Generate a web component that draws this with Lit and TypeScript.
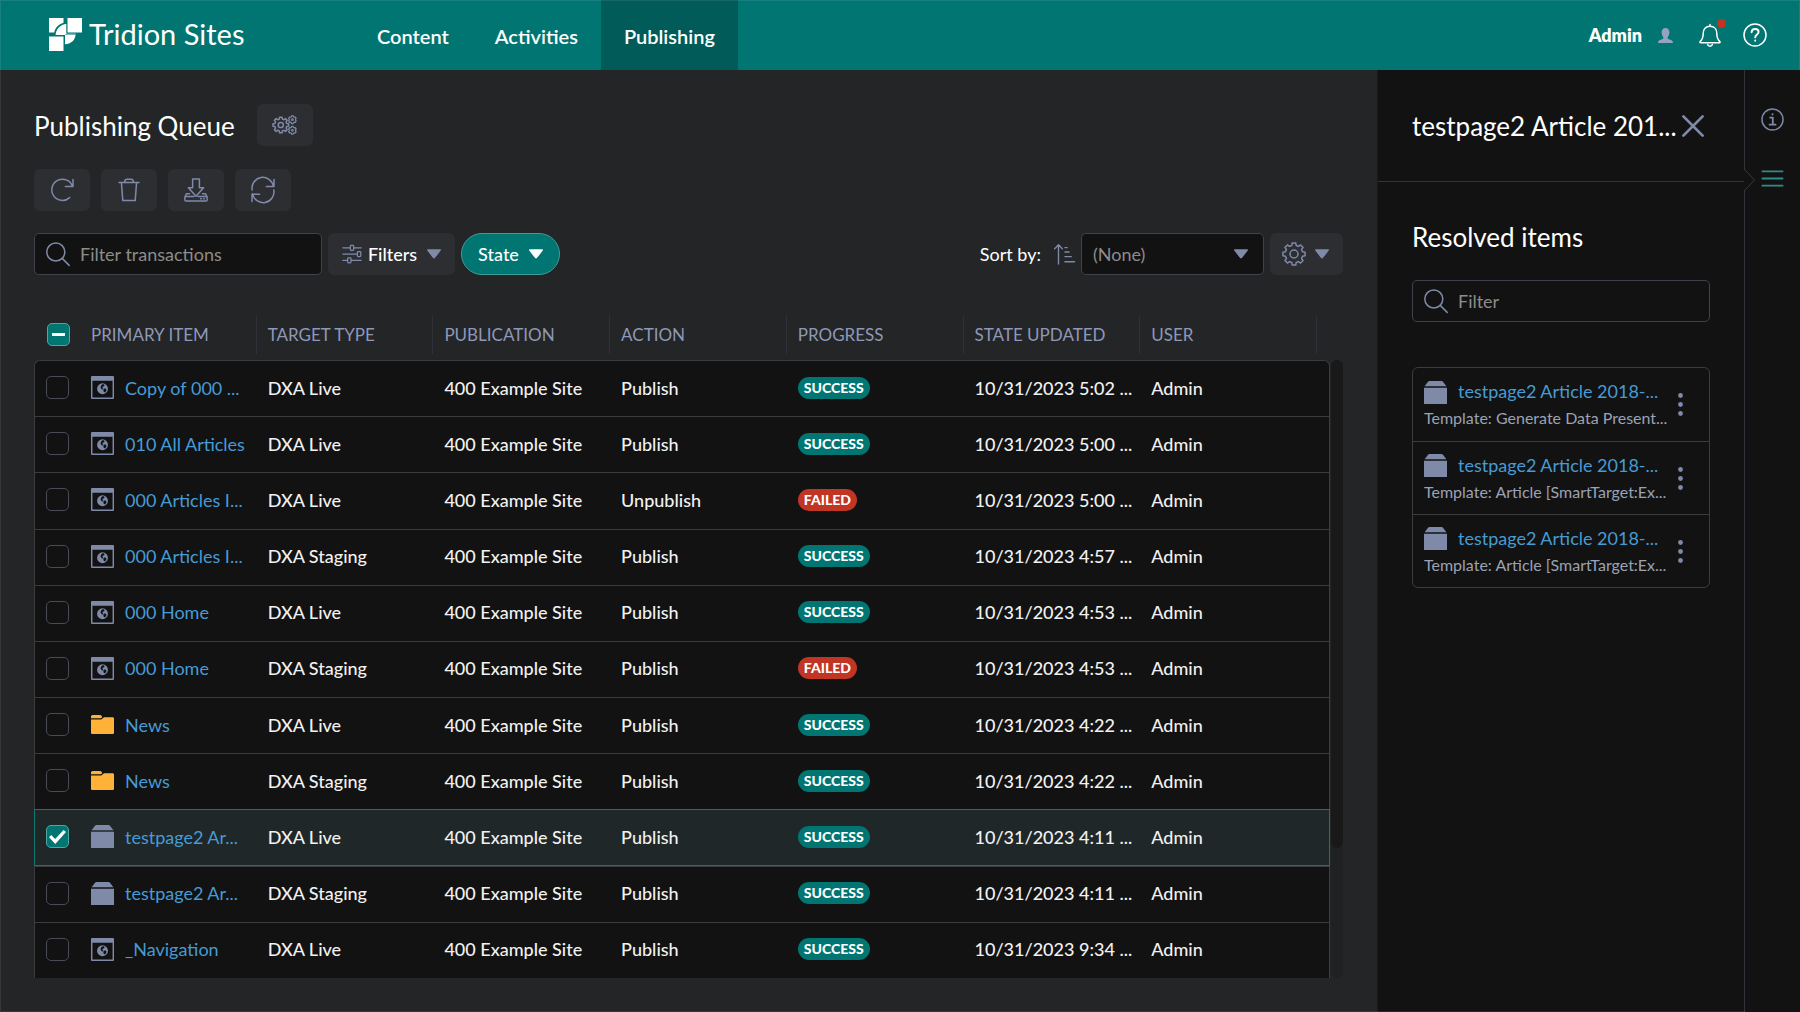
import { LitElement, html, svg, css } from "lit";
import { customElement, property, state } from "lit/decorators.js";
import { classMap } from "lit/directives/class-map.js";

type Kind = "page" | "folder" | "component";

interface Transaction {
  id: number;
  kind: Kind;
  title: string;
  target: string;
  action: string;
  status: "SUCCESS" | "FAILED";
  updated: string;
}

const PUBLICATION = "400 Example Site";
const USER = "Admin";

const tx = (
  id: number,
  kind: Kind,
  title: string,
  target: string,
  updated: string,
  action = "Publish",
  status: "SUCCESS" | "FAILED" = "SUCCESS",
): Transaction => ({ id, kind, title, target, updated, action, status });

const TRANSACTIONS: Transaction[] = [
  tx(1, "page", "Copy of 000 ...", "DXA Live", "10/31/2023 5:02 ..."),
  tx(2, "page", "010 All Articles", "DXA Live", "10/31/2023 5:00 ..."),
  tx(3, "page", "000 Articles I...", "DXA Live", "10/31/2023 5:00 ...", "Unpublish", "FAILED"),
  tx(4, "page", "000 Articles I...", "DXA Staging", "10/31/2023 4:57 ..."),
  tx(5, "page", "000 Home", "DXA Live", "10/31/2023 4:53 ..."),
  tx(6, "page", "000 Home", "DXA Staging", "10/31/2023 4:53 ...", "Publish", "FAILED"),
  tx(7, "folder", "News", "DXA Live", "10/31/2023 4:22 ..."),
  tx(8, "folder", "News", "DXA Staging", "10/31/2023 4:22 ..."),
  tx(9, "component", "testpage2 Ar...", "DXA Live", "10/31/2023 4:11 ..."),
  tx(10, "component", "testpage2 Ar...", "DXA Staging", "10/31/2023 4:11 ..."),
  tx(11, "page", "_Navigation", "DXA Live", "10/31/2023 9:34 ..."),
];

const COLUMNS = ["PRIMARY ITEM", "TARGET TYPE", "PUBLICATION", "ACTION", "PROGRESS", "STATE UPDATED", "USER"];

const RESOLVED = [
  { title: "testpage2 Article 2018-...", template: "Template: Generate Data Present..." },
  { title: "testpage2 Article 2018-...", template: "Template: Article [SmartTarget:Ex..." },
  { title: "testpage2 Article 2018-...", template: "Template: Article [SmartTarget:Ex..." },
];

/** Outline of a toothed wheel with rounded shoulders. */
function gearPath(cx: number, cy: number, outer: number, inner: number, teeth: number): string {
  const step = (Math.PI * 2) / teeth;
  const at = (r: number, a: number) => `${(cx + r * Math.sin(a)).toFixed(2)} ${(cy - r * Math.cos(a)).toFixed(2)}`;
  const points: string[] = [];
  for (let i = 0; i < teeth; i++) {
    const a = i * step;
    points.push(at(outer, a - step * 0.2), at(outer, a + step * 0.2), at(inner, a + step * 0.32), at(inner, a + step * 0.68));
  }
  return `M${points.join("L")}Z`;
}

const ICONS = {
  gears: svg`<path d=${gearPath(7.8, 12, 7.9, 6.1, 8)} /><circle cx="7.8" cy="12" r="2.6" />
    <g stroke-width="1.2"><path d=${gearPath(19.4, 6.7, 4, 3.2, 6)} /><circle cx="19.4" cy="6.7" r=".8" />
    <path d=${gearPath(19.4, 17.3, 4, 3.2, 6)} /><circle cx="19.4" cy="17.3" r=".8" /></g>`,
  gear: svg`<path d=${gearPath(12, 12, 11.2, 8.8, 8)} /><circle cx="12" cy="12" r="4" />`,
  redo: svg`<path d="M19.6 19.6A10.6 10.6 0 1 1 22.4 8.2M23 1.4v7h-7.6" />`,
  trash: svg`<path d="M2 4.4h20M4.4 4.4l1.4 18.2h12.4l1.4-18.2M7.6 4.2c0-1.9.9-2.9 2.4-2.9h4c1.5 0 2.4 1 2.4 2.9" />`,
  install: svg`<path d="M8.6 1h6.8v8.8h4.2L12 18.2 4.4 9.800h4.200zM5.500 15.800H2.400L.9 19v3.100c0 .6.4 1 1 1h20.200c.6 0 1-.4 1-1V19l-1.500-3.200H18.500M1 18.600h9M14 18.600H23M16.600 20.800h.8M19.600 20.800h.8" />`,
  sync: svg`<path d="M1.200 12A10.700 10.700 0 0 1 22.400 8.200M23 1.400v7h-7.600M22.800 12A10.700 10.700 0 0 1 1.600 15.800M1 23.400v-7.200h7.600" />`,
  search: svg`<circle cx="9.800" cy="10" r="9" /><path d="M16.200 16.400l7 7" />`,
  filters: svg`<path d="M1 4.500h9M14.500 4.500H23M1 12h17M1 19.500h5.500M11 19.500h12" />
    <rect x="10" y="1.500" width="4" height="6" rx="1" /><rect x="18.500" y="9" width="4" height="6" rx="1" /><rect x="6.800" y="16.500" width="4" height="6" rx="1" />`,
  sort: svg`<path d="M6 23V2M1.800 6.200L6 2l4.200 4.200M13 5h2.500M13 9.800h4.500M13 14.800h7M13 20.400h10.500" />`,
  bell: svg`<path d="M12 1.600v1.600M12 3.200c-4.300 0-6.800 3.100-6.800 7.200 0 5.200-1.500 6.700-3 8.100-.6.600-.3 1.200.5 1.200h18.600c.8 0 1.100-.6.5-1.200-1.500-1.400-3-2.900-3-8.100 0-4.100-2.500-7.200-6.800-7.200zM9.600 21.600c.4 1.100 1.300 1.600 2.400 1.600s2-.5 2.400-1.600" />`,
  help: svg`<circle cx="12" cy="12" r="11" /><path stroke-width="1.900" d="M8.600 9.200c.1-2 1.500-3.200 3.500-3.200s3.500 1.100 3.500 2.900c0 2.400-3.400 2.700-3.400 5.500M12.200 17.400v.4" />`,
  info: svg`<circle cx="12" cy="12" r="11" /><path stroke-width="1.900" d="M9.600 10h2.700v7.400M9 17.400h6.200M12 6.300v.4" />`,
  close: svg`<path stroke-width="3" d="M1.500 1.500l21 21M22.500 1.500l-21 21" />`,
  menu: svg`<path stroke-width="1.900" d="M1.500 4.500h21M1.500 12h21M1.500 19.500h21" />`,
};

const SOLID = {
  user: svg`<path d="M12 0c3.900 0 6.200 2.700 6.200 6.600 0 3-1 6-2.700 7.700v2.500c0 1.100 7.500 2 8.100 5.200l.4 2H0l.4-2c.6-3.200 8.100-4.100 8.100-5.200v-2.500C6.800 12.600 5.800 9.600 5.800 6.600 5.800 2.700 8.100 0 12 0z" />`,
  page: svg`<path fill-rule="evenodd" d="M1 0h22a1 1 0 0 1 1 1v22a1 1 0 0 1-1 1H1a1 1 0 0 1-1-1V1a1 1 0 0 1 1-1zM1.500 5v17.500h21V5z" />
    <path fill-rule="evenodd" d="M12 7.600a5.700 5.700 0 1 1 0 11.400 5.700 5.700 0 0 1 0-11.400zM11.800 8.800c1.600-.3 2.600.4 2.200 1.300-.5.900-1.700.6-2 1.600-.2.900 1 1 .7 1.900-.3.800-1.500.3-2-.4-.6-.9-.9-1.500-.4-2.500.3-.8.700-1.600 1.500-1.900zM13.600 13.300c.9-.5 2.200-.2 2.500.7.100 1.100-.9 2.600-1.900 3-.9.200-.9-.9-1.200-1.700-.2-.7 0-1.600.6-2z" />`,
  folder: svg`<path d="M1.800 2h7.600c1.300 0 2.200 1.400 2.200 2.200 0 .5-.8 1.300-1.600 1.300H0V3.800C0 2.800.8 2 1.800 2zM0 6.700h10.600l3-2.200h8.900c.9 0 1.500.6 1.500 1.500v14.600c0 .8-.6 1.400-1.400 1.400H1.400c-.8 0-1.400-.6-1.400-1.400z" />`,
  component: svg`<path d="M5.800 0h12.400c.8 0 1.200.3 1.600.8L23.400 5.600H.6L4.200.8C4.600.3 5 0 5.800 0zM0 7h24v17H0z" />`,
  caret: svg`<path d="M1.200 4h21.600c1.200 0 1.600 1.300.8 2.200L13.600 19c-.9 1-2.300 1-3.200 0L.4 6.200C-.4 5.300 0 4 1.200 4z" />`,
  dots: svg`<circle cx="12" cy="2.600" r="2.500" /><circle cx="12" cy="12" r="2.500" /><circle cx="12" cy="21.400" r="2.500" />`,
};

@customElement("ts-icon")
export class TsIcon extends LitElement {
  @property() name = "";

  static styles = css`
    :host {
      display: inline-block;
      flex: none;
      width: 24px;
      height: 24px;
    }
    .glyph {
      display: block;
      width: 100%;
      height: 100%;
      overflow: visible;
    }
    .line {
      fill: none;
      stroke: currentColor;
      stroke-width: 1.5;
      stroke-linecap: round;
      stroke-linejoin: round;
    }
    .solid {
      fill: currentColor;
    }
  `;

  render() {
    const line = ICONS[this.name as keyof typeof ICONS];
    const solid = SOLID[this.name as keyof typeof SOLID];
    return html`<svg class="glyph ${line ? "line" : "solid"}" viewBox="0 0 24 24" aria-hidden="true">${line ?? solid}</svg>`;
  }
}

@customElement("app-root")
export class AppRoot extends LitElement {
  @state() private selected = new Set<number>([9]);

  static styles = css`
    :host {
      display: block;
      --teal: #007571;
      --bg: #242527;
      --panel: #121212;
      --raised: #2d2e32;
      --border: #40414a;
      --icon: #7f8aa9;
      --link: #469bd5;
      font-family: Lato, "Liberation Sans", sans-serif;
      font-size: 18px;
      line-height: 24px;
      color: #fff;
    }
    *,
    *::before,
    *::after {
      box-sizing: border-box;
    }
    h1,
    h2,
    p,
    ul {
      margin: 0;
      padding: 0;
    }
    h1,
    h2 {
      font-size: 26px;
      line-height: 32px;
      font-weight: 400;
      white-space: nowrap;
    }
    a {
      text-decoration: none;
      color: var(--link);
    }
    button,
    input,
    select {
      font: inherit;
      color: inherit;
      margin: 0;
    }
    button {
      border: 0;
      background: none;
      padding: 0;
      cursor: pointer;
    }
    .shell {
      display: flex;
      flex-direction: column;
      min-height: 100vh;
      background: var(--bg);
      outline: 1px solid rgba(255, 255, 255, 0.09);
      outline-offset: -1px;
    }

    .topbar {
      display: flex;
      align-items: stretch;
      height: 70px;
      padding: 0 33px 0 49px;
      background: var(--teal);
    }
    .brand {
      display: flex;
      align-items: center;
      gap: 7px;
      width: 305px;
      padding-bottom: 2px;
      color: #fff;
      font-size: 29px;
      white-space: nowrap;
    }
    .logo {
      width: 33px;
      height: 33px;
      fill: #fff;
    }
    .nav {
      display: flex;
    }
    .tab {
      display: flex;
      align-items: center;
      padding: 2px 23px 0;
      color: #fff;
      font-size: 20px;
      font-weight: 600;
    }
    .tab.active {
      background: #005b59;
    }
    .account {
      display: flex;
      align-items: center;
      margin-left: auto;
    }
    .user {
      display: flex;
      align-items: center;
      gap: 16px;
      font-weight: 800;
    }
    .user ts-icon {
      width: 15px;
      height: 15px;
      color: #94a3bf;
    }
    .bell {
      position: relative;
      display: flex;
      margin-left: 25px;
    }
    .alert {
      position: absolute;
      top: -4px;
      right: -4px;
      width: 9px;
      height: 9px;
      border-radius: 50%;
      background: #c8321f;
    }
    .help {
      display: flex;
      margin-left: 21px;
    }

    .workspace {
      flex: 1;
      display: grid;
      grid-template-columns: minmax(0, 1fr) 368px 55px;
    }
    .queue {
      display: flex;
      flex-direction: column;
      padding: 34px 34px 34px;
      min-width: 0;
    }
    .heading {
      display: flex;
      align-items: center;
      gap: 22px;
    }
    .heading h1 {
      padding-top: 2px;
    }
    .tool {
      display: flex;
      align-items: center;
      justify-content: center;
      height: 42px;
      min-width: 56px;
      border-radius: 6px;
      background: var(--raised);
      color: var(--icon);
    }
    .tools {
      display: flex;
      gap: 11px;
      margin-top: 23px;
    }
    .bar {
      display: flex;
      align-items: center;
      gap: 6px;
      margin-top: 22px;
    }
    .search {
      display: flex;
      align-items: center;
      gap: 10px;
      height: 42px;
      padding: 0 11px;
      border: 1px solid var(--border);
      border-radius: 5px;
      background: var(--panel);
      color: var(--icon);
    }
    .bar .search {
      width: 288px;
    }
    .search input {
      flex: 1;
      min-width: 0;
      padding: 0;
      border: 0;
      outline: 0;
      background: none;
      color: #fff;
    }
    .search input::placeholder {
      color: #8d8c8a;
      opacity: 1;
    }
    .tool.filters {
      width: 127px;
      gap: 6px;
    }
    .tool.filters .text {
      padding-right: 4px;
      color: #fff;
      font-weight: 500;
    }
    .tool.filters ts-icon:first-child {
      width: 20px;
    }
    .caret {
      width: 14px;
      height: 14px;
    }
    .pill {
      display: flex;
      align-items: center;
      justify-content: center;
      gap: 10px;
      width: 99px;
      height: 42px;
      border: 1px solid #3f9c98;
      border-radius: 21px;
      background: var(--teal);
      font-weight: 500;
    }
    .sorting {
      display: flex;
      align-items: center;
      gap: 6px;
      margin-left: auto;
    }
    .order {
      display: flex;
      margin-left: 6px;
      color: var(--icon);
    }
    .order ts-icon {
      width: 22px;
      height: 22px;
    }
    .choice {
      display: grid;
      align-items: center;
      width: 183px;
      color: var(--icon);
    }
    .choice select {
      grid-area: 1 / 1;
      appearance: none;
      width: 100%;
      height: 42px;
      padding: 0 11px;
      border: 1px solid var(--border);
      border-radius: 5px;
      background: var(--panel);
      color: #8d8c8a;
    }
    .choice ts-icon {
      grid-area: 1 / 1;
      justify-self: end;
      margin-right: 16px;
      pointer-events: none;
    }
    .tool.options {
      width: 73px;
      padding-right: 3px;
      gap: 9px;
    }

    .list {
      flex: 1;
      display: grid;
      grid-template-columns: minmax(0, 1fr) 12px;
      column-gap: 1px;
      margin-top: 36px;
    }
    .grid {
      width: 100%;
      height: 100%;
      table-layout: fixed;
      border-collapse: separate;
      border-spacing: 0;
    }
    .col-check {
      width: 46px;
    }
    .col-end {
      width: 13px;
    }
    .grid th {
      height: 49px;
      padding: 4px 0 6px;
      text-align: left;
      font-weight: 400;
      font-size: 17px;
      color: #8e98b8;
      white-space: nowrap;
    }
    .head {
      display: block;
      height: 39px;
      padding-left: 11px;
      line-height: 39px;
      border-right: 1px solid #303138;
    }
    .grid td {
      height: 56px;
      padding: 0 0 2px 11px;
      border-top: 1px solid var(--line, #3b3c3f);
      background: var(--panel);
      white-space: nowrap;
      overflow: hidden;
      color: #f1f1f1;
      font-weight: 500;
    }
    .grid th:first-child {
      padding-left: 13px;
    }
    .grid td:first-child {
      padding-left: 11px;
      border-left: 1px solid var(--line, #3b3c3f);
    }
    .grid td:last-child {
      border-right: 1px solid var(--line, #3b3c3f);
    }
    .grid tbody tr:first-child td:first-child {
      border-top-left-radius: 6px;
    }
    .grid tbody tr:first-child td:last-child {
      border-top-right-radius: 6px;
    }
    .grid .chosen td {
      --line: #0b7a74;
      background: #1f2728;
      box-shadow: inset 0 -1px #0b7a74;
    }
    .item {
      display: flex;
      align-items: center;
      gap: 11px;
      font-weight: 400;
    }
    .item ts-icon,
    .entry ts-icon {
      width: 23px;
      height: 23px;
      color: var(--icon);
    }
    .item .folder {
      color: #ffb237;
    }
    .check {
      appearance: none;
      display: grid;
      place-items: center;
      width: 23px;
      height: 23px;
      border: 1px solid #4a4b58;
      border-radius: 5px;
      background: var(--panel);
    }
    .check:checked,
    .check:indeterminate {
      border-color: #4fa7a2;
      background: var(--teal);
    }
    .check:checked::before {
      content: "";
      width: 17px;
      height: 14px;
      background: #fff;
      clip-path: polygon(0 52%, 13% 36%, 36% 64%, 86% 0, 100% 14%, 37% 100%);
    }
    .check:indeterminate::before {
      content: "";
      width: 13px;
      height: 3px;
      background: #fff;
    }
    .badge {
      display: block;
      width: fit-content;
      height: 22px;
      padding: 0 6px;
      border-radius: 11px;
      background: var(--teal);
      color: #fff;
      font-size: 14px;
      line-height: 22px;
      font-weight: 900;
    }
    .badge.failed {
      background: #c03523;
    }
    .track {
      margin-top: 49px;
      border-radius: 6px;
      background: #202123;
    }
    .thumb {
      height: 79%;
      border-radius: 6px;
      background: #191919;
    }

    .details {
      border-left: 1px solid #1a1b1d;
      border-right: 1px solid #33343b;
      background: var(--panel);
      min-width: 0;
    }
    .title {
      display: flex;
      align-items: center;
      justify-content: space-between;
      height: 112px;
      padding: 0 40px 0 34px;
      border-bottom: 1px solid #33343b;
    }
    .close {
      display: flex;
      color: var(--icon);
    }
    .close ts-icon {
      width: 22px;
      height: 22px;
    }
    .resolved {
      padding: 39px 34px;
    }
    .resolved .search {
      margin-top: 27px;
    }
    .entries {
      margin-top: 45px;
      border: 1px solid #3b3c3f;
      border-radius: 6px;
      list-style: none;
    }
    .entry {
      display: flex;
      align-items: center;
      height: 73px;
      padding: 0 17px 0 11px;
    }
    .entry + .entry {
      border-top: 1px solid #3b3c3f;
    }
    .info {
      flex: 1;
      min-width: 0;
      white-space: nowrap;
    }
    .name {
      display: flex;
      align-items: center;
      gap: 11px;
      height: 24px;
    }
    .name a {
      padding-bottom: 2px;
    }
    .template {
      margin-top: 3px;
      color: #9ba2b4;
      font-size: 16px;
      line-height: 22px;
    }
    .more {
      display: flex;
    }
    .rail {
      display: flex;
      flex-direction: column;
      align-items: center;
      position: relative;
      padding-top: 38px;
      gap: 36px;
      background: var(--panel);
      color: var(--icon);
    }
    .rail button {
      display: flex;
    }
    .rail ts-icon {
      width: 23px;
      height: 23px;
    }
    .rail .current {
      color: #2f8c88;
    }
    .notch {
      position: absolute;
      left: -2px;
      top: 98px;
      width: 13px;
      height: 24px;
      fill: var(--panel);
      stroke: #3b3c44;
    }
  `;

  private toggle(id: number) {
    const next = new Set(this.selected);
    if (!next.delete(id)) next.add(id);
    this.selected = next;
  }

  private toggleAll(event: Event) {
    const on = (event.target as HTMLInputElement).checked;
    this.selected = new Set(on ? TRANSACTIONS.map((t) => t.id) : []);
  }

  private renderTopbar() {
    return html`
      <header class="topbar">
        <a class="brand" href="#home">
          <svg class="logo" viewBox="0 0 33 33" aria-hidden="true">
            <path d="M0 0h14.500v4.800C9.500 6.300 6 10 5.300 14.500H0zM18.500 0H33v14.500H18.500zM0 18.500h14.500V33H0z" />
            <path d="M15.500 6.200c.6-.1 1.200-.2 1.800-.2v9.700h9.500c0 .3 0 .4-.1.700h-10.500v.6H6.600C7 11.600 10.500 7.300 15.500 6.200z" />
            <path d="M16 17h10.500c-.4 5.200-4.600 9-10.500 9.200z" />
          </svg>
          <span>Tridion Sites</span>
        </a>
        <nav class="nav">
          <a class="tab" href="#content">Content</a>
          <a class="tab" href="#activities">Activities</a>
          <a class="tab active" href="#publishing" aria-current="page">Publishing</a>
        </nav>
        <div class="account">
          <button class="user">Admin <ts-icon name="user"></ts-icon></button>
          <button class="bell" aria-label="Notifications"><ts-icon name="bell"></ts-icon><span class="alert"></span></button>
          <button class="help" aria-label="Help"><ts-icon name="help"></ts-icon></button>
        </div>
      </header>
    `;
  }

  private renderRow(t: Transaction) {
    const on = this.selected.has(t.id);
    return html`
      <tr class=${classMap({ chosen: on })}>
        <td><input class="check" type="checkbox" aria-label="Select ${t.title}" .checked=${on} @change=${() => this.toggle(t.id)} /></td>
        <td><div class="item"><ts-icon class=${t.kind} name=${t.kind}></ts-icon><a href="#item-${t.id}">${t.title}</a></div></td>
        <td>${t.target}</td>
        <td>${PUBLICATION}</td>
        <td>${t.action}</td>
        <td><span class="badge ${t.status.toLowerCase()}">${t.status}</span></td>
        <td>${t.updated}</td>
        <td>${USER}</td>
        <td></td>
      </tr>
    `;
  }

  private renderQueue() {
    const some = this.selected.size > 0 && this.selected.size < TRANSACTIONS.length;
    return html`
      <main class="queue">
        <div class="heading">
          <h1>Publishing Queue</h1>
          <button class="tool" aria-label="Queue settings"><ts-icon name="gears"></ts-icon></button>
        </div>
        <div class="tools">
          <button class="tool" aria-label="Republish"><ts-icon name="redo"></ts-icon></button>
          <button class="tool" aria-label="Delete"><ts-icon name="trash"></ts-icon></button>
          <button class="tool" aria-label="Download"><ts-icon name="install"></ts-icon></button>
          <button class="tool" aria-label="Refresh"><ts-icon name="sync"></ts-icon></button>
        </div>
        <div class="bar">
          <label class="search">
            <ts-icon name="search"></ts-icon>
            <input type="text" placeholder="Filter transactions" aria-label="Filter transactions" />
          </label>
          <button class="tool filters">
            <ts-icon name="filters"></ts-icon><span class="text">Filters</span><ts-icon class="caret" name="caret"></ts-icon>
          </button>
          <button class="pill">State <ts-icon class="caret" name="caret"></ts-icon></button>
          <div class="sorting">
            <label for="sort">Sort by:</label>
            <button class="order" aria-label="Sort order"><ts-icon name="sort"></ts-icon></button>
            <div class="choice">
              <select id="sort"><option>(None)</option></select>
              <ts-icon class="caret" name="caret"></ts-icon>
            </div>
            <button class="tool options" aria-label="View options">
              <ts-icon name="gear"></ts-icon><ts-icon class="caret" name="caret"></ts-icon>
            </button>
          </div>
        </div>
        <div class="list">
          <table class="grid">
            <colgroup>
              <col class="col-check" />
              ${COLUMNS.map(() => html`<col />`)}
              <col class="col-end" />
            </colgroup>
            <thead>
              <tr>
                <th>
                  <input
                    class="check"
                    type="checkbox"
                    aria-label="Select all"
                    .indeterminate=${some}
                    .checked=${this.selected.size === TRANSACTIONS.length}
                    @change=${this.toggleAll}
                  />
                </th>
                ${COLUMNS.map((c) => html`<th scope="col"><span class="head">${c}</span></th>`)}
                <th></th>
              </tr>
            </thead>
            <tbody>
              ${TRANSACTIONS.map((t) => this.renderRow(t))}
            </tbody>
          </table>
          <div class="track"><div class="thumb"></div></div>
        </div>
      </main>
    `;
  }

  private renderDetails() {
    return html`
      <aside class="details">
        <div class="title">
          <h2>testpage2 Article 201...</h2>
          <button class="close" aria-label="Close"><ts-icon name="close"></ts-icon></button>
        </div>
        <section class="resolved">
          <h2>Resolved items</h2>
          <label class="search">
            <ts-icon name="search"></ts-icon>
            <input type="text" placeholder="Filter" aria-label="Filter resolved items" />
          </label>
          <ul class="entries">
            ${RESOLVED.map(
              (r) => html`
                <li class="entry">
                  <div class="info">
                    <div class="name"><ts-icon name="component"></ts-icon><a href="#resolved">${r.title}</a></div>
                    <p class="template">${r.template}</p>
                  </div>
                  <button class="more" aria-label="More actions"><ts-icon name="dots"></ts-icon></button>
                </li>
              `,
            )}
          </ul>
        </section>
      </aside>
      <nav class="rail" aria-label="Panels">
        <svg class="notch" viewBox="0 0 13 24" aria-hidden="true"><path d="M1 1l10.500 11L1 23" /></svg>
        <button aria-label="Information"><ts-icon name="info"></ts-icon></button>
        <button class="current" aria-label="Resolved items"><ts-icon name="menu"></ts-icon></button>
      </nav>
    `;
  }

  render() {
    return html`
      <div class="shell">
        ${this.renderTopbar()}
        <div class="workspace">${this.renderQueue()} ${this.renderDetails()}</div>
      </div>
    `;
  }
}
